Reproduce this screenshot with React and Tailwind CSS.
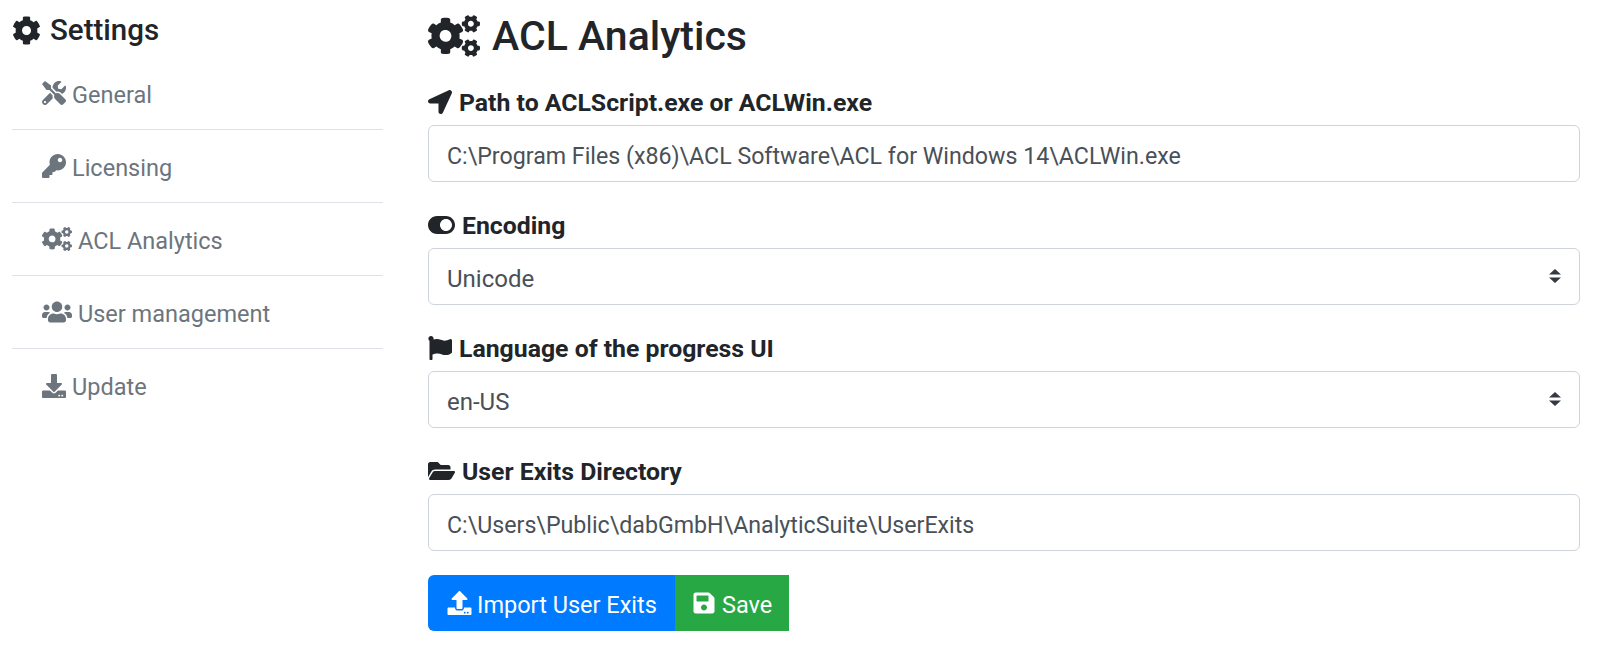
import React from 'react';
import {
  FaCog, FaCogs, FaTools, FaKey, FaUsers, FaDownload, FaLocationArrow,
  FaToggleOn, FaFlag, FaFolderOpen, FaUpload, FaSave,
} from 'react-icons/fa';

const navItems = [
  { label: 'General', icon: FaTools, iconClass: 'w-6 h-6' },
  { label: 'Licensing', icon: FaKey, iconClass: 'w-6 h-6' },
  { label: 'ACL Analytics', icon: FaCogs, iconClass: 'w-[30px] h-6' },
  { label: 'User management', icon: FaUsers, iconClass: 'w-[30px] h-6' },
  { label: 'Update', icon: FaDownload, iconClass: 'w-6 h-6' },
];

function FieldLabel({ icon: Icon, iconClass, children }) {
  return (
    <label className="flex items-center gap-[7px] h-9 mb-[5px] font-bold text-[24.8px] leading-9">
      <Icon className={iconClass} />
      <span className="pt-[2px]">{children}</span>
    </label>
  );
}

const inputClass =
  'block w-full h-[57px] px-[18px] pt-1 text-[23.2px] text-[#495057] bg-white border border-[#ced4da] rounded-md outline-none';
const selectClass =
  'block w-full h-[57px] px-[18px] pt-1 text-[24px] text-[#495057] bg-white border border-[#ced4da] rounded-md outline-none appearance-none';

export default function App() {
  return (
    <div className="flex pl-3 pr-[27px] pt-3 bg-white text-[#212529] min-h-[663px] font-['Roboto',sans-serif]">
      {/* Sidebar */}
      <div className="w-[371px] shrink-0">
        <h4 className="flex items-center gap-[9px] h-9 mb-[9px] text-[29.5px] font-medium leading-9">
          <FaCog className="w-[29px] h-[29px]" />
          Settings
        </h4>
        <ul>
          {navItems.map((item, i) => (
            <li
              key={item.label}
              className={
                i < navItems.length - 1
                  ? 'flex items-center gap-[6px] h-[73px] pl-[30px] text-[23.5px] text-[#6c757d] border-b border-[#dee2e6]'
                  : 'flex items-center gap-[6px] h-[73px] pl-[30px] text-[23.5px] text-[#6c757d]'
              }
            >
              <item.icon className={item.iconClass} />
              <span className="pt-[5px]">{item.label}</span>
            </li>
          ))}
        </ul>
      </div>

      {/* Main */}
      <div className="flex-1 min-w-0 ml-[45px]">
        <h2 className="flex items-center gap-[12px] h-12 mb-6 text-[41px] font-medium leading-[48px]">
          <FaCogs className="w-[52px] h-[42px]" />
          ACL Analytics
        </h2>

        <div className="mb-[25px]">
          <FieldLabel icon={FaLocationArrow} iconClass="w-6 h-6">Path to ACLScript.exe or ACLWin.exe</FieldLabel>
          <input readOnly className={inputClass} value="C:\Program Files (x86)\ACL Software\ACL for Windows 14\ACLWin.exe" />
        </div>

        <div className="mb-[25px]">
          <FieldLabel icon={FaToggleOn} iconClass="w-[27px] h-6">Encoding</FieldLabel>
          <div className="relative">
            <select className={selectClass} defaultValue="Unicode">
              <option>Unicode</option>
            </select>
            <SelectArrows />
          </div>
        </div>

        <div className="mb-[25px]">
          <FieldLabel icon={FaFlag} iconClass="w-6 h-6">Language of the progress UI</FieldLabel>
          <div className="relative">
            <select className={selectClass} defaultValue="en-US">
              <option>en-US</option>
            </select>
            <SelectArrows />
          </div>
        </div>

        <div className="mb-6">
          <FieldLabel icon={FaFolderOpen} iconClass="w-[27px] h-6">User Exits Directory</FieldLabel>
          <input readOnly className={inputClass} value="C:\Users\Public\dabGmbH\AnalyticSuite\UserExits" />
        </div>

        <div className="flex">
          <button type="button" className="flex items-center gap-[5px] w-[247px] h-14 pl-[19px] text-[23.5px] text-white bg-[#007bff] rounded-l-md">
            <FaUpload className="w-[25px] h-6" />
            <span className="pt-[5px]">Import User Exits</span>
          </button>
          <button type="button" className="flex items-center gap-[7px] w-[114px] h-14 pl-[18px] text-[23.5px] text-white bg-[#28a745]">
            <FaSave className="w-[22px] h-6" />
            <span className="pt-[5px]">Save</span>
          </button>
        </div>
      </div>
    </div>
  );
}

function SelectArrows() {
  return (
    <svg
      viewBox="0 0 4 5"
      preserveAspectRatio="none"
      className="absolute right-[19px] top-[21px] w-3 h-[14px] pointer-events-none"
    >
      <path fill="#343a40" d="M2 0L0 2h4zm0 5L0 3h4z" />
    </svg>
  );
}
